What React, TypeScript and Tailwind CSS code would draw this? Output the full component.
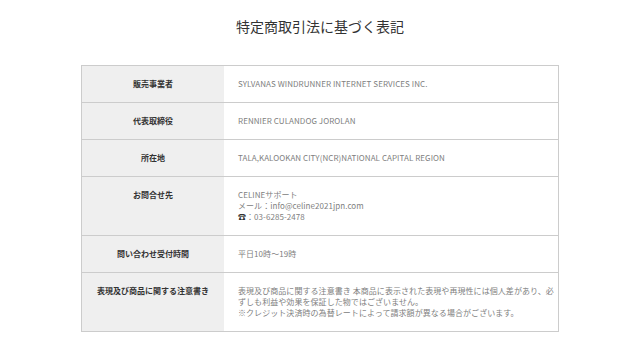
import React from "react";

const rows: { label: string; lines: React.ReactNode[] }[] = [
  { label: "販売事業者", lines: ["SYLVANAS WINDRUNNER INTERNET SERVICES INC."] },
  { label: "代表取締役", lines: ["RENNIER CULANDOG JOROLAN"] },
  { label: "所在地", lines: ["TALA,KALOOKAN CITY(NCR)NATIONAL CAPITAL REGION"] },
  {
    label: "お問合せ先",
    lines: [
      "CELINEサポート",
      "メール：info@celine2021jpn.com",
      <>
        <span className="text-[#333]">☎</span>：03-6285-2478
      </>,
    ],
  },
  { label: "問い合わせ受付時間", lines: ["平日10時〜19時"] },
  {
    label: "表現及び商品に関する注意書き",
    lines: [
      "表現及び商品に関する注意書き 本商品に表示された表現や再現性には個人差があり、必",
      "ずしも利益や効果を保証した物ではございません。",
      "※クレジット決済時の為替レートによって請求額が異なる場合がございます。",
    ],
  },
];

export default function App() {
  return (
    <div
      className="w-[640px] h-[342px] bg-white pt-[17px]"
      style={{ fontFamily: '"Noto Sans CJK JP", "Noto Sans", sans-serif' }}
    >
      <h1 className="text-center text-[14px] leading-[18px] text-[#333] font-normal mb-[30px]">
        特定商取引法に基づく表記
      </h1>
      <div className="w-[478px] mx-auto border border-[#cccccc]">
        {rows.map((r, i) => (
          <div
            key={i}
            className={`flex ${i < rows.length - 1 ? "border-b border-[#cccccc]" : ""}`}
          >
            <div className="w-[142px] shrink-0 bg-[#efefef] pt-[12px] pb-[13px] text-center text-[8px] leading-[11px] font-bold text-[#333]">
              {r.label}
            </div>
            <div className="flex-1 pl-[14px] pt-[12px] pb-[13px] text-[8px] leading-[11px] tracking-[0.06px] text-[#808080]">
              {r.lines.map((l, j) => (
                <div key={j} className="whitespace-nowrap">
                  {l}
                </div>
              ))}
            </div>
          </div>
        ))}
      </div>
    </div>
  );
}
